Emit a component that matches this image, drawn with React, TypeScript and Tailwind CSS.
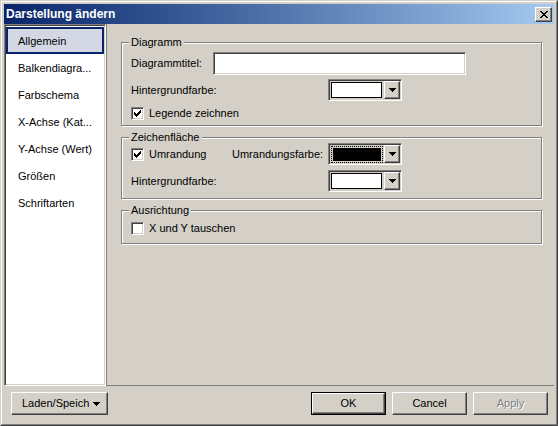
import React from 'react';

const raised = 'border border-t-white border-l-white border-b-[#404040] border-r-[#404040] shadow-[inset_-1px_-1px_0_#808080]';
const sunken = 'border border-t-[#808080] border-l-[#808080] border-b-white border-r-white shadow-[inset_1px_1px_0_#404040,inset_-1px_-1px_0_#d4d0c8]';

const Arrow = () => (
    <svg width="7" height="4" viewBox="0 0 7 4" shapeRendering="crispEdges">
        <rect x="0" y="0" width="7" height="1" fill="#000" />
        <rect x="1" y="1" width="5" height="1" fill="#000" />
        <rect x="2" y="2" width="3" height="1" fill="#000" />
        <rect x="3" y="3" width="1" height="1" fill="#000" />
    </svg>
);

const CheckBox = ({ checked }: { checked?: boolean }) => (
    <div className={`w-[13px] h-[13px] bg-white shrink-0 ${sunken}`}>
        {checked && (
            <svg width="11" height="11" viewBox="0 0 11 11" shapeRendering="crispEdges" className="block">
                <g fill="#000">
                    <rect x="8" y="2" width="1" height="1" />
                    <rect x="7" y="3" width="2" height="1" />
                    <rect x="2" y="4" width="1" height="1" />
                    <rect x="6" y="4" width="3" height="1" />
                    <rect x="2" y="5" width="2" height="1" />
                    <rect x="5" y="5" width="3" height="1" />
                    <rect x="2" y="6" width="5" height="1" />
                    <rect x="3" y="7" width="3" height="1" />
                    <rect x="4" y="8" width="1" height="1" />
                </g>
            </svg>
        )}
    </div>
);

const ColorCombo = ({ dark, focused }: { dark?: boolean; focused?: boolean }) => (
    <div className={`flex w-[74px] h-[22px] bg-[#d4d0c8] ${sunken} p-[1px]`}>
        <div className="flex-1 flex items-center pl-[1px]">
            {focused ? (
                <div className="w-[52px] h-[17px] border border-dotted border-black p-[1px]">
                    <div className={`w-full h-full border border-black ${dark ? 'bg-black' : 'bg-white'}`} />
                </div>
            ) : (
                <div className={`w-[51px] h-[16px] border border-black ${dark ? 'bg-black' : 'bg-white'}`} />
            )}
        </div>
        <div className={`w-[16px] h-full flex items-center justify-center ${raised} bg-[#d4d0c8]`}>
            <Arrow />
        </div>
    </div>
);

const Group = ({ title, className, children }: { title: string; className?: string; children: React.ReactNode }) => (
    <div className={`relative w-[421px] border border-[#808080] shadow-[1px_1px_0_#fff,inset_1px_1px_0_#fff] ${className ?? ''}`}>
        <div className="absolute left-[7px] -top-[7px] px-[2px] bg-[#d4d0c8] leading-[13px]">{title}</div>
        {children}
    </div>
);

const Btn = ({ label, isDefault, disabled, w = 'w-[75px]' }: { label: string; isDefault?: boolean; disabled?: boolean; w?: string }) => (
    <div className={`${w} h-[23px] ${isDefault ? 'border border-black' : ''}`}>
        <div className={`w-full h-full flex items-center justify-center bg-[#d4d0c8] ${raised}`}>
            <span className={disabled ? 'text-[#808080] [text-shadow:1px_1px_0_#fff]' : ''}>{label}</span>
        </div>
    </div>
);

const items = ['Allgemein', 'Balkendiagra...', 'Farbschema', 'X-Achse (Kat...', 'Y-Achse (Wert)', 'Größen', 'Schriftarten'];

export default function App() {
    return (
        <div className="w-[558px] h-[426px] bg-[#d4d0c8] font-['Liberation_Sans',Arial,sans-serif] text-[11px] text-black border border-t-[#d4d0c8] border-l-[#d4d0c8] border-b-[#404040] border-r-[#404040]">
            <div className="w-full h-full border border-t-white border-l-white border-b-[#808080] border-r-[#808080] p-[2px] flex flex-col">
                {/* title bar */}
                <div className="h-[20px] shrink-0 flex items-center justify-between pl-[2px] pr-[2px] bg-gradient-to-r from-[#0a246a] to-[#a6caf0]">
                    <span className="text-white font-bold text-[12px] leading-none">Darstellung ändern</span>
                    <div className={`w-[17px] h-[15px] flex items-center justify-center bg-[#d4d0c8] ${raised}`}>
                        <svg width="8" height="7" viewBox="0 0 8 7" shapeRendering="crispEdges">
                            <g fill="#000">
                                <rect x="0" y="0" width="2" height="1" /><rect x="6" y="0" width="2" height="1" />
                                <rect x="1" y="1" width="2" height="1" /><rect x="5" y="1" width="2" height="1" />
                                <rect x="2" y="2" width="4" height="1" />
                                <rect x="3" y="3" width="2" height="1" />
                                <rect x="2" y="4" width="4" height="1" />
                                <rect x="1" y="5" width="2" height="1" /><rect x="5" y="5" width="2" height="1" />
                                <rect x="0" y="6" width="2" height="1" /><rect x="6" y="6" width="2" height="1" />
                            </g>
                        </svg>
                    </div>
                </div>

                {/* main */}
                <div className="h-[362px] shrink-0 flex">
                    <div className={`w-[102px] h-full bg-white ${sunken} p-[1px] pt-[2px]`}>
                        {items.map((it, i) => (
                            <div
                                key={it}
                                className={`h-[27px] flex items-center pl-[10px] pt-[2px] border-2 ${i === 0 ? 'border-[#0a246a] bg-[#d4d8e4]' : 'border-transparent'}`}
                            >
                                {it}
                            </div>
                        ))}
                    </div>

                    <div className="flex-1 h-full border-l border-l-[#808080] border-b border-b-[#808080] pl-[14px] pt-[18px]">
                        <Group title="Diagramm" className="h-[84px] pl-[9px] pt-[9px]">
                            <div className="flex items-center h-[23px]">
                                <span className="w-[82px]">Diagrammtitel:</span>
                                <div className={`w-[253px] h-[23px] bg-white ${sunken}`} />
                            </div>
                            <div className="flex items-center h-[22px] mt-[4px]">
                                <span className="w-[197px]">Hintergrundfarbe:</span>
                                <ColorCombo />
                            </div>
                            <div className="flex items-center h-[13px] mt-[6px] gap-[5px]">
                                <CheckBox checked />
                                <span>Legende zeichnen</span>
                            </div>
                        </Group>

                        <Group title="Zeichenfläche" className="h-[62px] mt-[11px] pl-[9px] pt-[5px]">
                            <div className="flex items-center h-[22px]">
                                <div className="w-[101px] flex items-center gap-[5px]">
                                    <CheckBox checked />
                                    <span>Umrandung</span>
                                </div>
                                <span className="w-[96px]">Umrandungsfarbe:</span>
                                <ColorCombo dark focused />
                            </div>
                            <div className="flex items-center h-[22px] mt-[5px]">
                                <span className="w-[197px]">Hintergrundfarbe:</span>
                                <ColorCombo />
                            </div>
                        </Group>

                        <Group title="Ausrichtung" className="h-[34px] mt-[11px] pl-[9px] pt-[11px]">
                            <div className="flex items-center h-[13px] gap-[5px]">
                                <CheckBox />
                                <span>X und Y tauschen</span>
                            </div>
                        </Group>
                    </div>
                </div>

                {/* bottom buttons */}
                <div className="flex-1 flex items-start pt-[6px] pl-[7px] pr-[6px]">
                    <div className={`w-[97px] h-[23px] flex items-center justify-between pl-[10px] pr-[7px] bg-[#d4d0c8] ${raised}`}>
                        <span>Laden/Speich</span>
                        <Arrow />
                    </div>
                    <div className="flex-1" />
                    <div className="flex gap-[6px]">
                        <Btn label="OK" isDefault />
                        <Btn label="Cancel" />
                        <Btn label="Apply" disabled />
                    </div>
                </div>
            </div>
        </div>
    );
}
